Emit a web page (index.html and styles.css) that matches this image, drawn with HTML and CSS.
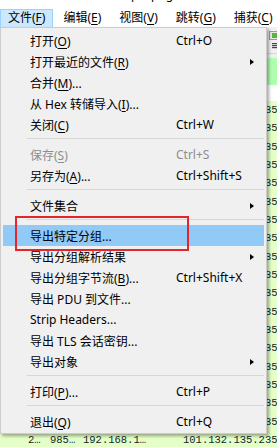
FILE: index.html
```html
<!DOCTYPE html>
<html lang="zh-CN">
<head>
  <meta charset="UTF-8" />
  <title>Wireshark 文件菜单</title>
  <meta name="viewport" content="width=device-width, initial-scale=1" />
  <link rel="stylesheet" href="styles.css">
</head>
<body>
  <div class="app">
    <!-- 窗口标题（被裁掉大半） -->
    <div class="titlebar"><span>抓包.pcapng</span></div>

    <!-- 菜单栏 -->
    <div class="menubar">
      <span class="mb-item active">文件(<u>F</u>)</span>
      <span class="mb-item">编辑(<u>E</u>)</span>
      <span class="mb-item">视图(<u>V</u>)</span>
      <span class="mb-item">跳转(<u>G</u>)</span>
      <span class="mb-item">捕获(<u>C</u>)</span>
    </div>

    <!-- 工具栏 -->
    <div class="toolbar">
      <span class="tb-ico"></span><span class="tb-ico"></span><span class="tb-ico"></span>
      <span class="tb-ico"></span><span class="tb-ico"></span><span class="tb-ico"></span>
      <span class="tb-ico"></span><span class="tb-ico"></span><span class="tb-ico"></span>
      <span class="tb-ico"></span><span class="tb-ico"></span>
      <svg class="tb-svg" viewBox="0 0 14 18" width="14" height="18">
        <rect x="0.5" y="0.5" width="13" height="8" fill="#e6e6e6" stroke="#9c9c9c"/>
        <rect x="3" y="2" width="10" height="5" fill="#5cb338"/>
        <rect x="3" y="12" width="10" height="1.2" fill="#444"/>
        <rect x="3" y="14" width="10" height="1.2" fill="#444"/>
        <rect x="3" y="16" width="10" height="1.2" fill="#444"/>
      </svg>
    </div>

    <!-- 显示过滤器 -->
    <div class="filterbar"><div class="filter-input"></div></div>

    <!-- 分组列表 -->
    <div class="packets">
      <div class="pk-head"></div>
      <div class="pk-row"><span>2…</span><span>985…</span><span>192.168.1…</span><span>101.132.135.235</span></div>
      <div class="pk-row"><span>2…</span><span>985…</span><span>192.168.1…</span><span>101.132.135.235</span></div>
      <div class="pk-row"><span>2…</span><span>985…</span><span>192.168.1…</span><span>101.132.135.235</span></div>
      <div class="pk-row"><span>2…</span><span>985…</span><span>192.168.1…</span><span>101.132.135.235</span></div>
      <div class="pk-row"><span>2…</span><span>985…</span><span>192.168.1…</span><span>101.132.135.235</span></div>
      <div class="pk-row"><span>2…</span><span>985…</span><span>192.168.1…</span><span>101.132.135.235</span></div>
      <div class="pk-row"><span>2…</span><span>985…</span><span>192.168.1…</span><span>101.132.135.235</span></div>
      <div class="pk-row"><span>2…</span><span>985…</span><span>192.168.1…</span><span>101.132.135.235</span></div>
      <div class="pk-row"><span>2…</span><span>985…</span><span>192.168.1…</span><span>101.132.135.235</span></div>
      <div class="pk-row"><span>2…</span><span>985…</span><span>192.168.1…</span><span>101.132.135.235</span></div>
      <div class="pk-row"><span>2…</span><span>985…</span><span>192.168.1…</span><span>101.132.135.235</span></div>
      <div class="pk-row"><span>2…</span><span>985…</span><span>192.168.1…</span><span>101.132.135.235</span></div>
      <div class="pk-row"><span>2…</span><span>985…</span><span>192.168.1…</span><span>101.132.135.235</span></div>
      <div class="pk-row"><span>2…</span><span>985…</span><span>192.168.1…</span><span>101.132.135.235</span></div>
      <div class="pk-row"><span>2…</span><span>985…</span><span>192.168.1…</span><span>101.132.135.235</span></div>
      <div class="pk-row"><span>2…</span><span>985…</span><span>192.168.1…</span><span>101.132.135.235</span></div>
      <div class="pk-row"><span>2…</span><span>985…</span><span>192.168.1…</span><span>101.132.135.235</span></div>
      <div class="pk-row"><span>2…</span><span>985…</span><span>192.168.1…</span><span>101.132.135.235</span></div>
      <div class="pk-row"><span>2…</span><span>985…</span><span>192.168.1…</span><span>101.132.135.235</span></div>
    </div>

    <!-- 文件 下拉菜单 -->
    <div class="menu">
      <div class="mi"><span>打开(<u>O</u>)</span><span class="sc">Ctrl+O</span></div>
      <div class="mi"><span>打开最近的文件(<u>R</u>)</span><span class="sc"></span><span class="sub"></span></div>
      <div class="mi"><span>合并(<u>M</u>)...</span></div>
      <div class="mi"><span>从 Hex 转储导入(<u>I</u>)...</span></div>
      <div class="mi"><span>关闭(<u>C</u>)</span><span class="sc">Ctrl+W</span></div>
      <div class="sep"></div>
      <div class="mi disabled"><span>保存(<u>S</u>)</span><span class="sc">Ctrl+S</span></div>
      <div class="mi"><span>另存为(<u>A</u>)...</span><span class="sc">Ctrl+Shift+S</span></div>
      <div class="sep"></div>
      <div class="mi"><span>文件集合</span><span class="sc"></span><span class="sub"></span></div>
      <div class="sep"></div>
      <div class="mi hover"><span>导出特定分组...</span></div>
      <div class="mi"><span>导出分组解析结果</span><span class="sc"></span><span class="sub"></span></div>
      <div class="mi"><span>导出分组字节流(<u>B</u>)...</span><span class="sc">Ctrl+Shift+X</span></div>
      <div class="mi"><span>导出 PDU 到文件...</span></div>
      <div class="mi"><span>Strip Headers...</span></div>
      <div class="mi"><span>导出 TLS 会话密钥...</span></div>
      <div class="mi"><span>导出对象</span><span class="sc"></span><span class="sub"></span></div>
      <div class="sep"></div>
      <div class="mi"><span>打印(<u>P</u>)...</span><span class="sc">Ctrl+P</span></div>
      <div class="sep"></div>
      <div class="mi"><span>退出(<u>Q</u>)</span><span class="sc">Ctrl+Q</span></div>
    </div>

    <!-- 红色标注框 -->
    <div class="callout"></div>
  </div>
</body>
</html>
```

FILE: styles.css
```css
body {
  margin: 0;
  background: #fff;
  font-family: "Noto Sans", "Noto Sans CJK SC", sans-serif;
  font-size: 12px;
  color: #000;
}
u {
  text-decoration-thickness: 1px;
  text-underline-offset: 2px;
}
.app {
  position: relative;
  width: 277px;
  height: 447px;
  overflow: hidden;
}

/* 标题 */
.titlebar {
  height: 8px;
  overflow: hidden;
  text-align: center;
}
.titlebar span {
  display: block;
  line-height: 16px;
  margin-top: -13px;
}

/* 菜单栏 */
.menubar {
  display: flex;
  height: 19px;
  padding-top: 1px;
  box-sizing: border-box;
  background: #fff;
}
.mb-item {
  padding: 0 7px 0 7px;
  margin-right: 2px;
  line-height: 16px;
  border: 1px solid transparent;
  border-bottom: none;
  white-space: nowrap;
}
.mb-item.active {
  background: #cce8ff;
  border-color: #99d1ff;
}

/* 工具栏 */
.toolbar {
  display: flex;
  align-items: flex-start;
  gap: 8px;
  height: 26px;
  padding: 4px 0 0 5px;
  box-sizing: border-box;
  background: #f0f0f0;
}
.tb-ico {
  width: 16px;
  height: 16px;
  flex: none;
  background: #dcdcdc;
}
.tb-svg {
  flex: none;
}

/* 过滤器 */
.filterbar {
  height: 32px;
  padding-top: 4px;
  box-sizing: border-box;
  background: #f0f0f0;
  border-top: 1px solid #d6d6d6;
}
.filter-input {
  height: 28px;
  background: #afffaf;
}

/* 分组列表 */
.packets {
  background: #fff;
}
.pk-head {
  height: 16px;
  background: #fff;
}
.pk-row {
  display: grid;
  grid-template-columns: 22px 33px 100px auto;
  height: 18.33px;
  padding-left: 28px;
  align-items: center;
  background: #e4ffc7;
  font-family: "Liberation Mono", monospace;
  font-size: 10.5px;
  color: #12272e;
  white-space: nowrap;
}

/* 下拉菜单 */
.menu {
  position: absolute;
  left: 0;
  top: 27px;
  width: 267px;
  box-sizing: border-box;
  padding: 2px 0 1px;
  background: #f0f0f0;
  border: 1px solid #cccccc;
  box-shadow: 2px 2px 3px rgba(0, 0, 0, 0.35);
}
.mi {
  display: grid;
  grid-template-columns: 146px 1fr 14px;
  align-items: center;
  height: 21px;
  margin: 0 2px;
  padding-left: 27px;
  white-space: nowrap;
}
.mi.hover {
  background: #91c9f7;
}
.mi.disabled {
  color: #8d8d8d;
}
.sub {
  width: 0;
  height: 0;
  border-top: 3.5px solid transparent;
  border-bottom: 3.5px solid transparent;
  border-left: 4px solid #000;
}
.sep {
  height: 1px;
  margin: 3px 2px 5px 26px;
  background: #d7d7d7;
}

/* 红框标注 */
.callout {
  position: absolute;
  left: 15px;
  top: 216px;
  width: 174px;
  height: 35px;
  box-sizing: border-box;
  border: 2px solid #e4262c;
}
```
